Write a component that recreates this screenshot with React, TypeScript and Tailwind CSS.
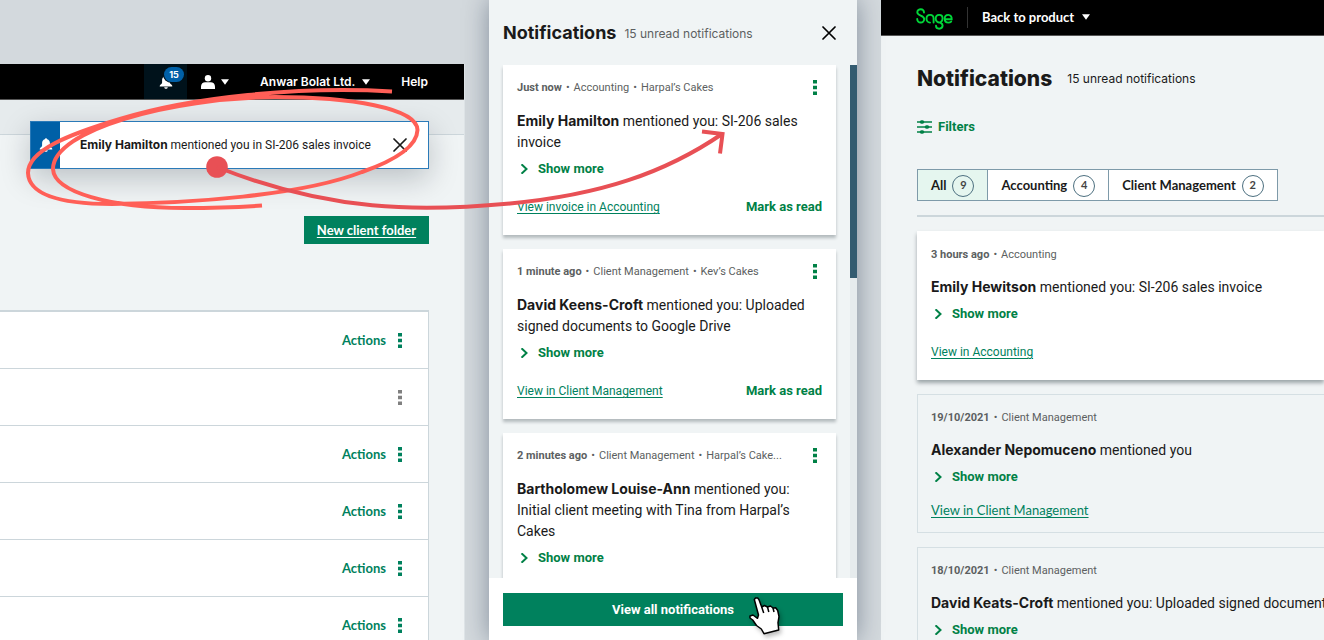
import React from "react";

type Item = {
  when: string;
  tags: string[];
  who: string;
  text: string;
  link?: string;
};

const drawerItems: Item[] = [
  { when: "Just now", tags: ["Accounting", "Harpal’s Cakes"], who: "Emily Hamilton", text: "mentioned you: SI-206 sales invoice", link: "View invoice in Accounting" },
  { when: "1 minute ago", tags: ["Client Management", "Kev’s Cakes"], who: "David Keens-Croft", text: "mentioned you: Uploaded signed documents to Google Drive", link: "View in Client Management" },
  { when: "2 minutes ago", tags: ["Client Management", "Harpal’s Cake..."], who: "Bartholomew Louise-Ann", text: "mentioned you: Initial client meeting with Tina from Harpal’s Cakes" },
];

const rows = [true, false, true, true, true, true];

function Caret() {
  return (
    <svg viewBox="0 0 8 6" className="h-[6px] w-2 shrink-0 fill-white" aria-hidden="true">
      <path d="M0 0.300h8L4 5.800z" />
    </svg>
  );
}

function Bell({ className }: { className: string }) {
  return (
    <svg viewBox="0 0 14 14" className={className} aria-hidden="true">
      <path d="M7 0.2c.7 0 1.1.4 1.2 1C10 1.700 10.900 3.200 10.900 5v2.600c0 1 .9 1.600 1.700 2.200.5.400.7.900.7 1.700H.7c0-.8.2-1.300.7-1.700.8-.6 1.700-1.200 1.700-2.200V5c0-1.800.9-3.300 2.700-3.800.1-.6.5-1 1.200-1zM5.200 12.300h3.600c-.2 1-.9 1.500-1.800 1.500s-1.600-.5-1.800-1.500z" />
    </svg>
  );
}

function Dots({ className }: { className: string }) {
  return (
    <svg viewBox="0 0 4 15" className={"h-[15px] w-1 " + className} aria-hidden="true">
      <path d="M0 0h4v3.600H0zM0 5.700h4v3.600H0zM0 11.400h4V15H0z" />
    </svg>
  );
}

function Cross({ className }: { className: string }) {
  return (
    <svg viewBox="0 0 14 14" className={className} fill="none" stroke="currentColor" strokeWidth="1.700" strokeLinecap="round" aria-hidden="true">
      <path d="M1 1l12 12M13 1L1 13" />
    </svg>
  );
}

function Meta({ when, tags }: { when: string; tags: string[] }) {
  return (
    <p className="flex items-center gap-1 whitespace-nowrap pt-px font-['Roboto',sans-serif] text-[11px] leading-4 text-[#5c5f61]">
      <span className="font-bold">{when}</span>
      {tags.map((t) => (
        <React.Fragment key={t}>
          <span>•</span>
          <span>{t}</span>
        </React.Fragment>
      ))}
    </p>
  );
}

function ShowMore() {
  return (
    <button className="mt-2 flex h-4 items-center gap-2.5 pl-[3px] font-['Roboto',sans-serif] text-[13px] font-bold leading-4 text-[#008146]">
      <svg viewBox="0 0 8 10" className="h-2.5 w-2" fill="none" stroke="currentColor" strokeWidth="2" aria-hidden="true">
        <path d="M1.500 0.300L6.500 5L1.500 9.700" />
      </svg>
      Show more
    </button>
  );
}

function LeftPanel() {
  return (
    <section className="mt-16 flex min-w-0 flex-col overflow-hidden border-r border-[#dfe5e8] bg-[#f0f4f5]">
      <header className="flex h-9 shrink-0 items-center justify-end border-b border-[#555] bg-black pr-9 text-xs font-semibold text-white">
        <button className="relative flex h-full w-[43px] items-center justify-center bg-[#00121b]" aria-label="Alerts">
          <Bell className="h-3.5 w-3.5 fill-white" />
          <span className="absolute top-[3px] right-[3px] flex h-[15px] w-5 items-center justify-center rounded-full bg-[#0060a7] text-[9px] font-bold ring-1 ring-[#00121b]">15</span>
        </button>
        <button className="ml-3.5 flex items-center gap-1.5" aria-label="Account">
          <svg viewBox="0 0 14 14" className="h-3.5 w-3.5 fill-white" aria-hidden="true">
            <circle cx="7" cy="3.300" r="3.200" />
            <path d="M0 14v-2.500C0 8.800 2 7.300 4.200 7.300h5.600C12 7.300 14 8.800 14 11.500V14z" />
          </svg>
          <Caret />
        </button>
        <button className="ml-[31px] flex items-center gap-[7px] whitespace-nowrap">
          Anwar Bolat Ltd.
          <Caret />
        </button>
        <a href="#help" className="ml-[31px]">Help</a>
      </header>
      <div className="relative z-10 h-[35px] shrink-0 border-b border-[#ccd6db] bg-[#e6ebed]">
        <div role="status" className="absolute top-[21px] right-[35px] left-[30px] flex h-12 items-center border border-[#2a7ab8] bg-white text-xs text-[#1a1a1a] shadow-[0_10px_30px_rgba(0,20,30,0.22)]">
          <span className="flex h-full w-[29px] shrink-0 items-center justify-center bg-[#0060a7]">
            <Bell className="h-3.5 w-3.5 fill-white" />
          </span>
          <p className="flex-1 whitespace-nowrap pl-5 font-['Roboto',sans-serif]">
            <b className="font-['Inter',sans-serif]">Emily Hamilton</b> mentioned you in SI-206 sales invoice
          </p>
          <button aria-label="Dismiss" className="mr-[21px]">
            <Cross className="h-3.5 w-3.5" />
          </button>
        </div>
      </div>
      <div className="flex flex-col items-end pt-[81px] pr-[35px]">
        <button className="h-7 w-[125px] shrink-0 bg-[#00815d] pt-px font-['Lato',sans-serif] text-[13px] font-bold text-white underline underline-offset-2">
          New client folder
        </button>
        <table className="mt-[66px] w-full border-collapse border-r border-[#ccd6db] bg-white font-['Lato',sans-serif] text-[13px] font-bold text-[#00815d]">
          <tbody>
            {rows.map((on, i) => (
              <tr key={i} className={i === 0 ? "h-[57px] border-t-2 border-[#ccd6db]" : "h-[57px] border-t border-[#ccd6db]"}>
                <td className="pt-0.5 pr-[26px]">
                  <div className="flex items-center justify-end gap-3">
                    {on && <button>Actions</button>}
                    <button aria-label="Row menu">
                      <Dots className={on ? "fill-[#00815d]" : "fill-[#808080]"} />
                    </button>
                  </div>
                </td>
              </tr>
            ))}
          </tbody>
        </table>
      </div>
    </section>
  );
}

function Drawer() {
  return (
    <section className="relative flex min-h-0 min-w-0 flex-col bg-[#f0f4f5] shadow-[0_0_24px_rgba(0,20,51,0.38)]">
      <header className="flex h-[65px] shrink-0 items-center px-3.5">
        <h2 className="text-lg font-bold text-[#1a1a1a]">Notifications</h2>
        <span className="ml-2 flex-1 whitespace-nowrap pt-0.5 text-xs text-[#5c5f61]">15 unread notifications</span>
        <button aria-label="Close" className="mr-[7px]">
          <Cross className="h-3.5 w-3.5" />
        </button>
      </header>
      <div className="flex min-h-0 flex-1">
        <div className="flex min-w-0 flex-1 flex-col gap-3.5 overflow-hidden px-3.5">
          {drawerItems.map((n) => (
            <article key={n.who} className="shrink-0 bg-white px-3.5 pt-3.5 pb-5 shadow-[0_3px_3px_rgba(0,20,29,0.25)]">
              <div className="flex items-center justify-between pr-[5px]">
                <Meta when={n.when} tags={n.tags} />
                <button aria-label="More options">
                  <Dots className="fill-[#008146]" />
                </button>
              </div>
              <p className="mt-3.5 font-['Roboto',sans-serif] text-sm leading-[21px] text-[#1a1a1a]">
                <b className="font-['Inter',sans-serif]">{n.who}</b> {n.text}
              </p>
              <ShowMore />
              {n.link && (
                <div className="mt-[22px] flex items-center justify-between whitespace-nowrap font-['Roboto',sans-serif] leading-4">
                  <a href="#view" className="text-xs text-[#00815d] underline underline-offset-2">{n.link}</a>
                  <button className="text-[13px] font-bold text-[#008146]">Mark as read</button>
                </div>
              )}
            </article>
          ))}
        </div>
        <div className="w-[7px] bg-[#e6ebed]">
          <div className="h-[213px] bg-[#335b70]" />
        </div>
      </div>
      <footer className="shrink-0 bg-white px-3.5 pt-[15px] pb-3.5">
        <button className="h-[33px] w-full bg-[#00815d] font-['Roboto',sans-serif] text-[13px] font-bold text-white">View all notifications</button>
      </footer>
    </section>
  );
}

function SageLogo() {
  return (
    <svg viewBox="0 0 37 22" className="h-[22px] w-[37px] translate-y-px" fill="none" stroke="#00d639" strokeWidth="1.900" strokeLinecap="round" role="img" aria-label="Sage">
      <path d="M8 4.500C8 2.600 6.700 1.200 4.800 1.200C2.900 1.200 1.300 2.500 1.300 4.300C1.300 8.200 8.200 6.900 8.200 11C8.200 13 6.700 14.500 4.700 14.500C2.700 14.500 1.200 13 1.200 11" />
      <path d="M14 14.600C12 14.600 10.500 12.800 10.500 10.700C10.500 8.500 12 6.900 14.100 6.900C16.200 6.900 17.600 8.400 17.600 10.500V14.600" />
      <path d="M24.800 14C22 15.300 19.700 13.200 19.700 10.700C19.700 8.500 21.200 6.900 23.200 6.900C25.200 6.900 26.600 8.400 26.600 10.400C26.600 14.200 23 14.200 25 15.200C26 15.700 26.600 16.500 26.600 17.600C26.600 19.400 25.100 20.700 23.200 20.700C21.300 20.700 20 19.400 20 17.800" />
      <path d="M29.200 11.300H35.700C35.900 8.600 34.400 6.900 32.300 6.900C30.200 6.900 28.700 8.500 28.700 10.700C28.700 12.900 30.200 14.600 32.400 14.600C33.600 14.600 34.400 14.300 35.200 13.600" />
    </svg>
  );
}

const tabs = [
  { label: "All", count: 9 },
  { label: "Accounting", count: 4 },
  { label: "Client Management", count: 2 },
];

function PageItem({ item, unread }: { item: Item; unread?: boolean }) {
  return (
    <article
      className={
        unread
          ? "bg-white px-3.5 pt-[15px] pb-5 shadow-[0_3px_4px_rgba(0,20,29,0.35)]"
          : "mt-3.5 border border-r-0 border-[#d5dfe3] px-[13px] py-3.5"
      }
    >
      <Meta when={item.when} tags={item.tags} />
      <p className="mt-[13px] whitespace-nowrap font-['Roboto',sans-serif] text-sm leading-[21px] text-[#1a1a1a]">
        <b className="font-['Inter',sans-serif]">{item.who}</b> {item.text}
      </p>
      <ShowMore />
      {item.link && (
        <a
          href="#open"
          className={
            unread
              ? "mt-[22px] block font-['Roboto',sans-serif] text-xs leading-4 text-[#00815d] underline underline-offset-2"
              : "mt-[17px] block font-['Lato',sans-serif] text-[13px] leading-4 text-[#00815d] underline underline-offset-2"
          }
        >
          {item.link}
        </a>
      )}
    </article>
  );
}

function RightPanel() {
  return (
    <section className="flex min-w-0 flex-col overflow-hidden bg-[#f0f4f5]">
      <header className="flex h-9 shrink-0 items-center border-b border-[#555] bg-black pl-[35px] text-xs font-semibold text-white">
        <SageLogo />
        <span className="mx-3.5 h-[21px] w-px bg-[#333]" />
        <button className="flex items-center gap-2 whitespace-nowrap font-['Lato',sans-serif] text-[13px] font-bold">
          Back to product
          <Caret />
        </button>
      </header>
      <div className="pl-9">
        <div className="mt-[27px] flex h-8 items-center whitespace-nowrap">
          <h1 className="text-[21px] font-extrabold text-[#1a1a1a]">Notifications</h1>
          <span className="ml-[15px] text-xs text-[#1a1a1a]">15 unread notifications</span>
        </div>
        <button className="mt-[23px] flex h-[18px] items-center gap-1.5 font-['Roboto',sans-serif] text-[13px] font-bold text-[#008146]">
          <svg viewBox="0 0 15 14" className="h-3.5 w-[15px]" fill="none" stroke="currentColor" aria-hidden="true">
            <path strokeWidth="1.600" d="M0 2H15M0 7H15M0 12H15" />
            <path strokeWidth="3.600" strokeLinecap="round" d="M4.500 2H5.500M9.500 7H10.500M4.500 12H5.500" />
          </svg>
          Filters
        </button>
        <div className="mt-[33px] flex font-['Lato',sans-serif] text-[13px] font-bold text-[#1a1a1a]">
          {tabs.map((t, i) => (
            <button
              key={t.label}
              className={
                "flex h-8 items-center gap-1.5 whitespace-nowrap border-y border-r border-[#7e9aa9] px-[13px] pt-px " +
                (i === 0 ? "border-l bg-[#e5f6ef]" : "bg-white")
              }
            >
              {t.label}
              <span className="flex h-[22px] w-[22px] items-center justify-center rounded-full border border-[#4d7080] text-[11px] font-bold text-[#444]">
                {t.count}
              </span>
            </button>
          ))}
        </div>
        <hr className="mt-3.5 mb-3.5 border-t-2 border-[#ccd6db]" />
        <PageItem unread item={{ when: "3 hours ago", tags: ["Accounting"], who: "Emily Hewitson", text: "mentioned you: SI-206 sales invoice", link: "View in Accounting" }} />
        <PageItem item={{ when: "19/10/2021", tags: ["Client Management"], who: "Alexander Nepomuceno", text: "mentioned you", link: "View in Client Management" }} />
        <PageItem item={{ when: "18/10/2021", tags: ["Client Management"], who: "David Keats-Croft", text: "mentioned you: Uploaded signed documents" }} />
      </div>
    </section>
  );
}

function Annotations() {
  return (
    <svg viewBox="0 0 1324 640" preserveAspectRatio="xMinYMin slice" className="pointer-events-none absolute inset-0 z-20 h-full w-full" fill="none" aria-hidden="true">
      <path stroke="#ff5f57" strokeWidth="4" d="M392 91.500C300 86 190 97 120 119C70 134 28 150 28 173C29 196 64 204 112 204C190 203 300 196 362 172C396 160 417 146 417.500 130C417 108 350 97 275 97C170 98 53 130 53 169C54 192 110 208 185 208C212 208 240 207 262 205.500" />
      <circle cx="217" cy="167" r="10.800" fill="#e85055" />
      <path stroke="#e85055" strokeWidth="4" d="M217 167C330 212 420 212 510 203.500C600 195 665 173 722 134" />
      <path stroke="#e85055" strokeWidth="4" d="M702 131.500L722.500 134L720 153.500" />
      <g className="drop-shadow-[2px_3px_2px_rgba(0,0,0,0.25)]" stroke="#000" strokeWidth="1.500" strokeLinejoin="round">
        <path
          fill="#fff"
          d="M754.300 599.500L755.500 598H757.700L758.900 599.500L761.700 607L764.500 605.500L767.500 607L770.500 606L773 608L775.700 607.800L777.700 610.500L779 616.700L778 622.700L778.700 630L764 633.700L761.300 629L756.500 625.500L752.700 620L750 618L750 616L753 615L757.500 618.300L758.500 615Z"
        />
        <path d="M761.700 607L763.700 613M767.500 607L768.800 612M773 608L774 612" />
      </g>
    </svg>
  );
}

export default function App() {
  return (
    <main className="relative grid h-screen grid-cols-[465fr_368fr_443fr] grid-rows-[minmax(0,1fr)] gap-6 overflow-hidden bg-[#d3d9dd] font-['Inter',sans-serif]">
      <LeftPanel />
      <Drawer />
      <RightPanel />
      <Annotations />
    </main>
  );
}
